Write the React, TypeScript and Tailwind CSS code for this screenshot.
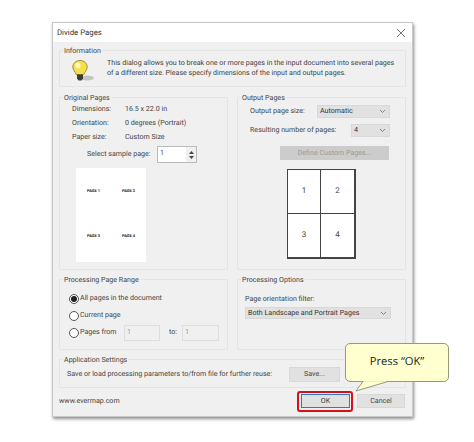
import React from 'react';

const Group = ({ title, className, children }: { title: string; className: string; children?: React.ReactNode }) => (
  <div className={`border border-[#e4e4e4] rounded-[1px] ${className}`}>
    <div className="flex h-0 items-center pl-[3px]">
      <span className="bg-[#f0f0f0] px-px text-[7.100px] leading-[12px] text-[#444]">{title}</span>
    </div>
    {children}
  </div>
);

const Select = ({ value, className }: { value: string; className: string }) => (
  <div className={`flex items-center justify-between bg-[#e1e1e1] border border-[#d8d8d8] pl-[2px] pr-[3px] text-[7.100px] text-[#333] ${className}`}>
    <span className="whitespace-nowrap">{value}</span>
    <svg width="7" height="5" viewBox="0 0 7 5" fill="none" stroke="#777" strokeWidth="0.9"><path d="M1 1l2.500 2.500L6 1" /></svg>
  </div>
);

const Radio = ({ checked }: { checked?: boolean }) => (
  <span className="flex h-[10px] w-[10px] shrink-0 items-center justify-center rounded-full border border-[#555] bg-white">
    {checked && <span className="h-[6px] w-[6px] rounded-full bg-[#222]" />}
  </span>
);

const Bulb = () => (
  <svg width="22" height="22" viewBox="0 0 22 22" className="mt-[2px] shrink-0">
    <ellipse cx="15" cy="18" rx="7" ry="2.500" fill="#c4c4c4" />
    <path d="M8 0.500C3.600 0.500 0.800 3.500 0.800 7c0 3.200 2.600 4.600 3.400 7.500h7.600c0.800-2.900 3.400-4.300 3.400-7.500C15.200 3.500 12.400 0.500 8 0.500z" fill="#f5e04a" stroke="#8a7a20" strokeWidth="0.8" />
    <ellipse cx="6" cy="5.500" rx="2.500" ry="3" fill="#fdf7b8" />
    <path d="M5 14.500h6v4L9.500 20.500h-3L5 18.500z" fill="#3c3c34" />
  </svg>
);

const SheetCell = ({ n, className }: { n: number; className: string }) => (
  <div className={`flex items-center justify-center bg-white text-[8px] text-[#444] border-[#444] ${className}`}>{n}</div>
);

const PageLabel = ({ text }: { text: string }) => (
  <span className="flex items-center justify-center whitespace-nowrap text-[4px] font-bold text-[#222]">{text}</span>
);

export default function App() {
  return (
    <div className="relative h-[442px] w-[474px] overflow-hidden bg-white pl-[52px] pt-[22px] font-['Roboto',sans-serif] text-[#444] [text-rendering:geometricPrecision]">
      {/* dialog */}
      <div className="h-[395px] w-[361px] border border-[#c8c8c8] bg-[#f0f0f0] shadow-[1px_2px_3px_rgba(0,0,0,0.45)]">
        <div className="flex h-[19px] items-center justify-between bg-white pl-[4px] pr-[6px] text-[7.800px] text-[#333]">
          <span>Divide Pages</span>
          <svg width="10" height="10" viewBox="0 0 10 10" stroke="#555" strokeWidth="0.8"><path d="M1 1l8 8M9 1l-8 8" /></svg>
        </div>

        <div className="flex flex-col pl-[6px] pt-[8px]">
          <Group title="Information" className="h-[37px] w-[347px]">
            <div className="flex items-start pl-[12px] pt-[7px]">
              <Bulb />
              <p className="ml-[13px] whitespace-nowrap text-[7.100px] leading-[9.500px]">
                This dialog allows you to break one or more pages in the input document into several pages<br />
                of a different size. Please specify dimensions of the input and output pages.
              </p>
            </div>
          </Group>

          <div className="mt-[10px] flex gap-[9px]">
            <Group title="Original Pages" className="h-[173px] w-[169px]">
              <div className="grid grid-cols-[53px_1fr] pl-[12px] pt-[4px] text-[7.100px] leading-[14px]">
                <span>Dimensions:</span><span>16.5 x 22.0 in</span>
                <span>Orientation:</span><span>0 degrees (Portrait)</span>
                <span>Paper size:</span><span>Custom Size</span>
              </div>
              <div className="ml-[27px] mt-[2px] flex items-center text-[7.100px]">
                <span className="w-[70px] whitespace-nowrap">Select sample page:</span>
                <div className="flex h-[17px] w-[40px] justify-between border border-[#bbb] bg-white pl-[2px] leading-[11px]">
                  <span>1</span>
                  <span className="flex w-[10px] flex-col items-center justify-center gap-[2px] bg-[#f0f0f0]">
                    <svg width="5" height="3" viewBox="0 0 5 3" fill="#444"><path d="M2.500 0L5 3H0z" /></svg>
                    <svg width="5" height="3" viewBox="0 0 5 3" fill="#444"><path d="M0 0h5L2.500 3z" /></svg>
                  </span>
                </div>
              </div>
              <div className="ml-[16px] mt-[5px] grid h-[94px] w-[70px] grid-cols-2 grid-rows-2 bg-white pb-[3px]">
                <PageLabel text="PAGE 1" />
                <PageLabel text="PAGE 2" />
                <PageLabel text="PAGE 3" />
                <PageLabel text="PAGE 4" />
              </div>
            </Group>

            <Group title="Output Pages" className="h-[173px] w-[169px]">
              <div className="flex flex-col pl-[12px] pt-[7px] text-[7.100px]">
                <div className="flex h-[13px] items-center justify-between pr-[15px]">
                  <span className="whitespace-nowrap">Output page size:</span>
                  <Select value="Automatic" className="h-[13px] w-[73px]" />
                </div>
                <div className="mt-[6px] flex h-[13px] items-center justify-between pr-[15px]">
                  <span className="whitespace-nowrap">Resulting number of pages:</span>
                  <Select value="4" className="h-[13px] w-[39px]" />
                </div>
                <div className="ml-[30px] mt-[9px] flex h-[14px] w-[109px] items-center justify-center bg-[#cccccc] text-[#9a9a9a]">
                  Define Custom Pages...
                </div>
              </div>
              <div className="ml-[49px] mt-[9px] grid h-[90px] w-[69px] grid-cols-2 grid-rows-2 border-b-2 border-l border-r-2 border-t border-[#444]">
                <SheetCell n={1} className="border-b border-r" />
                <SheetCell n={2} className="border-b" />
                <SheetCell n={3} className="border-r" />
                <SheetCell n={4} className="" />
              </div>
            </Group>
          </div>

          <div className="mt-[9px] flex gap-[9px]">
            <Group title="Processing Page Range" className="h-[71px] w-[169px]">
              <div className="flex flex-col pl-[9px] pt-[10px] text-[7.100px]">
                <div className="flex h-[17px] items-center gap-[1px]"><Radio checked /><span className="whitespace-nowrap">All pages in the document</span></div>
                <div className="flex h-[17px] items-center gap-[1px]"><Radio /><span className="whitespace-nowrap">Current page</span></div>
                <div className="flex h-[17px] items-center gap-[1px]">
                  <Radio />
                  <span className="w-[43px] whitespace-nowrap">Pages from</span>
                  <span className="h-[16px] w-[36px] border border-[#ddd] pl-[2px] leading-[11px] text-[#999]">1</span>
                  <span className="ml-[8px] w-[12px]">to:</span>
                  <span className="h-[16px] w-[37px] border border-[#ddd] pl-[2px] leading-[11px] text-[#999]">1</span>
                </div>
              </div>
            </Group>

            <Group title="Processing Options" className="h-[71px] w-[169px]">
              <div className="pl-[7px] pt-[13px] text-[7.100px]">
                <div className="leading-[12px]">Page orientation filter:</div>
                <Select value="Both Landscape and Portrait Pages" className="mt-[2px] h-[12px] w-[146px]" />
              </div>
            </Group>
          </div>

          <Group title="Application Settings" className="mt-[9px] h-[29px] w-[347px]">
            <div className="flex items-center pl-[7px] pt-[7px] text-[7.100px]">
              <span className="w-[222px] whitespace-nowrap">Save or load processing parameters to/from file for further reuse:</span>
              <span className="flex h-[15px] w-[51px] items-center justify-center border border-[#d8d8d8] bg-[#e1e1e1]">Save...</span>
            </div>
          </Group>
        </div>

        <div className="mt-[6px] flex items-center pl-[6px] text-[7.100px]">
          <span className="w-[242px]">www.evermap.com</span>
          <span className="flex h-[14px] w-[49px] items-center justify-center border border-[#2f7ac4] bg-[#e1e1e1]">OK</span>
          <span className="ml-[7px] flex h-[14px] w-[48px] items-center justify-center border border-[#d8d8d8] bg-[#e1e1e1]">Cancel</span>
        </div>
      </div>

      {/* red highlight around OK */}
      <div className="absolute left-[297px] top-[391px] h-[21px] w-[56px] rounded-[3px] border-2 border-[#d8101c]" />

      {/* callout */}
      <div className="absolute left-[345px] top-[343px] flex h-[39px] w-[104px] items-center justify-center rounded-[5px] border border-[#99997a] bg-[#ffffcf] font-['Open_Sans',sans-serif] text-[11.200px] text-[#222]">
        Press “OK”
      </div>
      <svg className="absolute left-[350px] top-[380px]" width="42" height="14" viewBox="0 0 42 14">
        <path d="M13 1.500L6 11 38 1.500" fill="#ffffcf" stroke="#99997a" strokeWidth="1" />
        <path d="M13.800 0.500h22v1.200h-22z" fill="#ffffcf" />
      </svg>
    </div>
  );
}
